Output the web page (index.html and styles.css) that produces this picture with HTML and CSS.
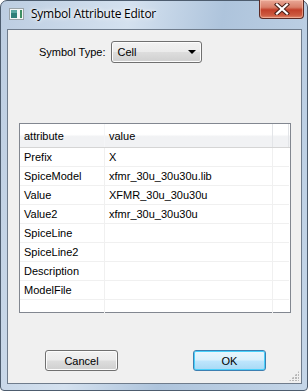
FILE: index.html
```html
<!DOCTYPE html>
<html>
<head>
<meta charset="UTF-8">
<title>Symbol Attribute Editor</title>
<link rel="stylesheet" href="styles.css">
</head>
<body>
<div class="window">
	<div class="titlebar">
		<svg class="app-icon" width="15" height="12" viewBox="0 0 15 12">
			<rect x="0.5" y="0.5" width="14" height="11" fill="#f4f6f6" stroke="#9aa3a8"/>
			<rect x="2" y="2" width="6" height="8" fill="#2f7f78"/>
			<rect x="2" y="2" width="6" height="3" fill="#5aa7a0"/>
			<rect x="11" y="2" width="2" height="8" fill="#3e8f63"/>
		</svg>
		<span class="title">Symbol Attribute Editor</span>
		<div class="close-btn">
			<svg width="16" height="12" viewBox="0 0 16 12">
				<path d="M3 1.5 L13 10.5 M13 1.5 L3 10.5" stroke="#4a2018" stroke-width="4.2" stroke-linecap="square"/>
				<path d="M3 1.5 L13 10.5 M13 1.5 L3 10.5" stroke="#ffffff" stroke-width="2.2" stroke-linecap="square"/>
			</svg>
		</div>
	</div>
	<div class="client">
		<div class="type-row">
			<label class="type-label">Symbol Type:</label>
			<div class="combo">
				<span>Cell</span>
				<span class="combo-arrow"></span>
			</div>
		</div>

		<div class="grid">
			<div class="grid-head">
				<div class="hcell">attribute</div>
				<div class="hcell">value</div>
				<div class="hcell"></div>
			</div>
			<div class="grid-row"><div class="cell">Prefix</div><div class="cell">X</div><div class="cell"></div></div>
			<div class="grid-row"><div class="cell">SpiceModel</div><div class="cell">xfmr_30u_30u30u.lib</div><div class="cell"></div></div>
			<div class="grid-row"><div class="cell">Value</div><div class="cell">XFMR_30u_30u30u</div><div class="cell"></div></div>
			<div class="grid-row"><div class="cell">Value2</div><div class="cell">xfmr_30u_30u30u</div><div class="cell"></div></div>
			<div class="grid-row"><div class="cell">SpiceLine</div><div class="cell"></div><div class="cell"></div></div>
			<div class="grid-row"><div class="cell">SpiceLine2</div><div class="cell"></div><div class="cell"></div></div>
			<div class="grid-row"><div class="cell">Description</div><div class="cell"></div><div class="cell"></div></div>
			<div class="grid-row"><div class="cell">ModelFile</div><div class="cell"></div><div class="cell"></div></div>
			<div class="grid-row last"><div class="cell"></div><div class="cell"></div><div class="cell"></div></div>
		</div>

		<div class="buttons">
			<div class="btn">Cancel</div>
			<div class="btn default">OK</div>
		</div>
		<div class="grip"></div>
	</div>
</div>
</body>
</html>
```

FILE: styles.css
```css
html, body {
	margin: 0;
	padding: 0;
	background: #ffffff;
}
body {
	width: 308px;
	height: 391px;
	font-family: "Liberation Sans", Arial, sans-serif;
	font-size: 11px;
	color: #000;
}
.window {
	position: relative;
	box-sizing: border-box;
	width: 308px;
	height: 391px;
	border: 1px solid #4d5c6e;
	border-radius: 7px 7px 4px 4px;
	background: linear-gradient(100deg, #bccde1 0%, #d4e1ef 35%, #aec4dc 60%, #c5d6e8 100%);
	padding: 0 5px 6px 6px;
	display: flex;
	flex-direction: column;
}
.titlebar {
	height: 28px;
	display: flex;
	align-items: center;
	position: relative;
}
.app-icon {
	margin: -3px 0 0 2px;
}
.title {
	margin: -4px 0 0 7px;
	font-family: "Open Sans", "Liberation Sans", sans-serif;
	font-size: 12px;
	color: #000;
	letter-spacing: -0.25px;
	text-shadow: 0 0 6px #ffffff, 0 0 3px #ffffff;
}
.close-btn {
	position: absolute;
	right: -2px;
	top: -1px;
	width: 45px;
	height: 19px;
	box-sizing: border-box;
	border: 1px solid #5b2a24;
	border-top: none;
	border-radius: 0 0 4px 4px;
	background: linear-gradient(#e9a897 0%, #d9806a 40%, #c2402a 55%, #cc5a40 85%, #e08a70 100%);
	box-shadow: inset 0 0 0 1px rgba(255, 210, 190, 0.5);
	display: flex;
	align-items: center;
	justify-content: center;
}
.client {
	position: relative;
	flex: 1;
	background: #f0f0f0;
	border: 1px solid #6f7c8c;
	display: flex;
	flex-direction: column;
}
.type-row {
	display: flex;
	align-items: center;
	margin: 11px 0 0 31px;
	height: 22px;
}
.type-label {
	margin-right: 6px;
}
.combo {
	box-sizing: border-box;
	width: 91px;
	height: 22px;
	border: 1px solid #707070;
	border-radius: 3px;
	background: linear-gradient(#f2f2f2 0%, #ebebeb 48%, #dddddd 52%, #cfcfcf 100%);
	box-shadow: inset 0 0 0 1px #fcfcfc;
	display: flex;
	align-items: center;
	justify-content: space-between;
	padding: 0 5px 0 5px;
}
.combo-arrow {
	width: 0;
	height: 0;
	border-left: 4px solid transparent;
	border-right: 4px solid transparent;
	border-top: 4px solid #000;
}
.grid {
	margin: 60px 10px 0 11px;
	border: 1px solid #828790;
	background: #fff;
	height: 190px;
	box-sizing: border-box;
}
.grid-head, .grid-row {
	display: grid;
	grid-template-columns: 85px 168px 16px;
}
.grid-head {
	height: 24px;
	background: linear-gradient(#ffffff 0%, #ffffff 45%, #f1f2f4 55%, #f1f2f4 100%);
	border-bottom: 1px solid #d5d5d5;
	box-sizing: border-box;
}
.hcell {
	display: flex;
	align-items: center;
	padding-left: 4px;
	border-right: 1px solid #e3e5e8;
}
.hcell:first-child {
	border-right-color: #f4f5f7;
}
.grid-row {
	height: 19px;
	box-sizing: border-box;
	border-bottom: 1px solid #f0f0f0;
	margin-right: 1px;
}
.grid-row.last {
	height: 13px;
	border-bottom: none;
}
.cell {
	display: flex;
	align-items: center;
	padding-left: 4px;
	border-right: 1px solid #f0f0f0;
}
.cell:last-child {
	border-right: none;
}
.buttons {
	display: flex;
	justify-content: space-between;
	margin: 37px 35px 0 37px;
}
.btn {
	box-sizing: border-box;
	width: 73px;
	height: 21px;
	border: 1px solid #707070;
	border-radius: 3px;
	background: linear-gradient(#f2f2f2 0%, #ebebeb 48%, #dddddd 52%, #cfcfcf 100%);
	box-shadow: inset 0 0 0 1px #fcfcfc;
	display: flex;
	align-items: center;
	justify-content: center;
	font-size: 11px;
}
.btn.default {
	border-color: #3c7fb1;
	background: linear-gradient(#eaf6fd 0%, #d9f0fc 48%, #bee6fd 52%, #a7d9f5 100%);
	box-shadow: inset 0 0 0 1px #48d0fb;
}
.grip {
	position: absolute;
	right: 2px;
	bottom: 2px;
	width: 10px;
	height: 10px;
	background:
		radial-gradient(circle at 1px 1px, #b8b8b8 1px, transparent 1.2px) 0 0 / 3px 3px;
	clip-path: polygon(100% 0, 100% 100%, 0 100%);
}
```
